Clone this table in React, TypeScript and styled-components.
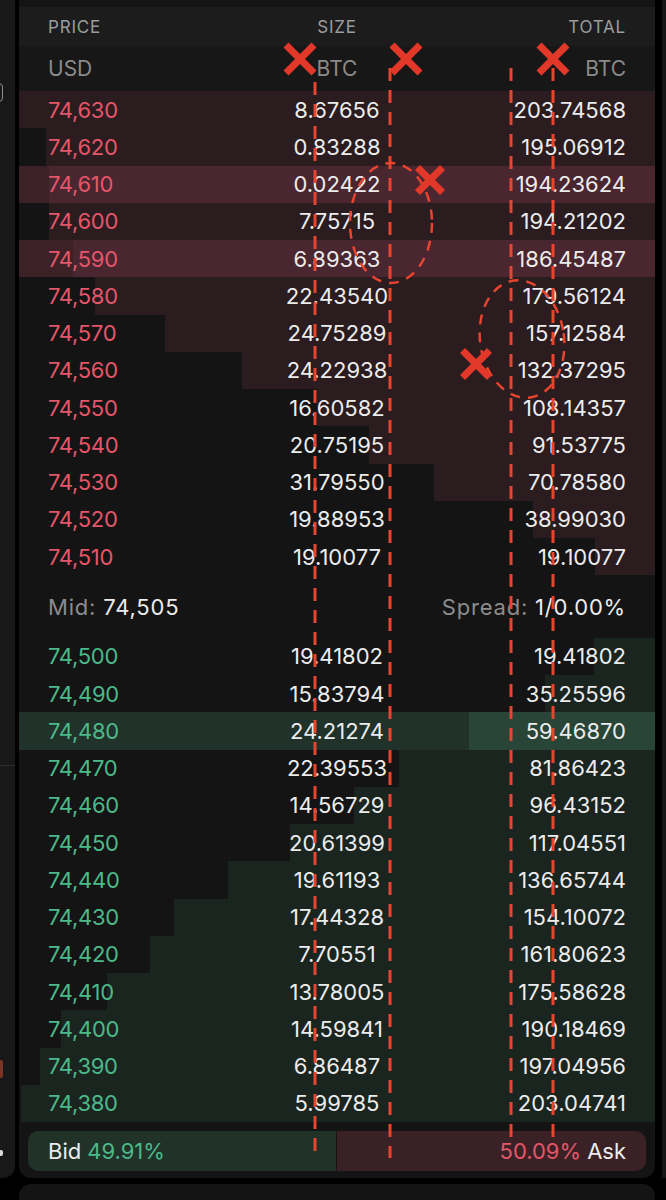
import React from 'react'
import styled, { createGlobalStyle } from 'styled-components'

type Level = { price: string; size: string; total: number; flash?: boolean }

const asks: Level[] = [
  { price: '74,630', size: '8.67656', total: 203.74568 },
  { price: '74,620', size: '0.83288', total: 195.06912 },
  { price: '74,610', size: '0.02422', total: 194.23624, flash: true },
  { price: '74,600', size: '7.75715', total: 194.21202 },
  { price: '74,590', size: '6.89363', total: 186.45487, flash: true },
  { price: '74,580', size: '22.43540', total: 179.56124 },
  { price: '74,570', size: '24.75289', total: 157.12584 },
  { price: '74,560', size: '24.22938', total: 132.37295 },
  { price: '74,550', size: '16.60582', total: 108.14357 },
  { price: '74,540', size: '20.75195', total: 91.53775 },
  { price: '74,530', size: '31.79550', total: 70.7858 },
  { price: '74,520', size: '19.88953', total: 38.9903 },
  { price: '74,510', size: '19.10077', total: 19.10077 },
]

const bids: Level[] = [
  { price: '74,500', size: '19.41802', total: 19.41802 },
  { price: '74,490', size: '15.83794', total: 35.25596 },
  { price: '74,480', size: '24.21274', total: 59.4687, flash: true },
  { price: '74,470', size: '22.39553', total: 81.86423 },
  { price: '74,460', size: '14.56729', total: 96.43152 },
  { price: '74,450', size: '20.61399', total: 117.04551 },
  { price: '74,440', size: '19.61193', total: 136.65744 },
  { price: '74,430', size: '17.44328', total: 154.10072 },
  { price: '74,420', size: '7.70551', total: 161.80623 },
  { price: '74,410', size: '13.78005', total: 175.58628 },
  { price: '74,400', size: '14.59841', total: 190.18469 },
  { price: '74,390', size: '6.86487', total: 197.04956 },
  { price: '74,380', size: '5.99785', total: 203.04741 },
]

const maxTotal = Math.max(...asks.map((a) => a.total), ...bids.map((b) => b.total))

type Side = 'ask' | 'bid'

const palette = {
  ask: { text: '#e4566a', bar: '#2a1c1f', flashRow: '#3c2227', flashBar: '#4a2630' },
  bid: { text: '#4cb98a', bar: '#1b2520', flashRow: '#20322a', flashBar: '#284537' },
}

const GlobalStyle = createGlobalStyle`
  *, *::before, *::after {
    box-sizing: border-box;
  }
  html, body {
    margin: 0;
    padding: 0;
    background: #000;
  }
  body {
    font-family: Inter, "Noto Sans", "Liberation Sans", sans-serif;
    -webkit-font-smoothing: antialiased;
  }
`

const Screen = styled.div`
  position: relative;
  width: 666px;
  height: 1200px;
  overflow: hidden;
  display: flex;
  flex-direction: column;
  background: #000;
`

const TopRow = styled.div`
  height: 1178px;
  display: flex;
`

const BottomRow = styled.div`
  flex: 1;
  margin-top: 6px;
  display: flex;
`

const LeftStub = styled.div`
  width: 15px;
  background: #181818;
  border-bottom-right-radius: 12px;
  display: flex;
  flex-direction: column;
  align-items: flex-start;
`

const StubIcon = styled.div`
  margin: 83px 0 0 -13px;
  width: 16px;
  height: 19px;
  border: 1.5px solid #8d8d8d;
  border-radius: 4px;
`

const StubRule = styled.div`
  margin-top: 663px;
  width: 15px;
  height: 1px;
  background: #2e2e2e;
`

const StubMark = styled.div<{ $color: string; $top: number; $h: number }>`
  margin-top: ${({ $top }) => $top}px;
  width: 3px;
  height: ${({ $h }) => $h}px;
  border-radius: 0 2px 2px 0;
  background: ${({ $color }) => $color};
`

const Panel = styled.div`
  width: 636px;
  margin: 0 7px 0 4px;
  padding-top: 7px;
  background: #141414;
  border-radius: 0 0 12px 12px;
  display: flex;
  flex-direction: column;
`

const RightStub = styled.div`
  width: 4px;
  background: #151515;
`

const LowerPanel = styled.div`
  width: 636px;
  margin: 0 7px 0 19px;
  background: #141414;
  border-radius: 12px 12px 0 0;
`

const Columns = styled.div`
  display: grid;
  grid-template-columns: 1fr 1fr 1fr;
  align-items: center;
  padding: 0 29px;
`

const HeadRow = styled(Columns)`
  height: 39px;
  background: #1c1c1c;
  color: #9c9c9c;
  font-size: 17px;
  letter-spacing: 0.8px;
`

const UnitRow = styled(Columns)`
  height: 45px;
  background: #171717;
  color: #8a8a8a;
  font-size: 21px;
`

const Cell = styled.span<{ $align?: 'left' | 'center' | 'right' }>`
  position: relative;
  text-align: ${({ $align }) => $align || 'left'};
  white-space: nowrap;
`

const BookRow = styled(Columns)<{ $side: Side; $flash?: boolean }>`
  position: relative;
  height: 37.25px;
  font-size: 22px;
  color: #ececec;
  background: ${({ $side, $flash }) => ($flash ? palette[$side].flashRow : 'transparent')};
`

const DepthBar = styled.div<{ $side: Side; $flash?: boolean }>`
  position: absolute;
  top: 0;
  right: 0;
  bottom: 0;
  background: ${({ $side, $flash }) => ($flash ? palette[$side].flashBar : palette[$side].bar)};
`

const Price = styled(Cell)<{ $side: Side }>`
  color: ${({ $side }) => palette[$side].text};
  letter-spacing: -0.3px;
`

const MidRow = styled.div`
  height: 62.5px;
  padding: 0 29px;
  display: flex;
  align-items: center;
  justify-content: space-between;
  font-size: 22px;
  letter-spacing: 0.8px;
  color: #ececec;
`

const Muted = styled.span`
  color: #8c8c8c;
`

const Ratio = styled.div`
  margin: 9px 9px 0;
  height: 40px;
  border-radius: 10px;
  overflow: hidden;
  display: flex;
  gap: 1px;
  font-size: 22px;
  color: #ececec;
`

const RatioPart = styled.div<{ $side: Side; $share?: number }>`
  display: flex;
  align-items: center;
  gap: 6px;
  ${({ $side, $share }) =>
    $side === 'bid'
      ? `width: ${$share}%; padding-left: 20px; background: #213229;`
      : `flex: 1; justify-content: flex-end; padding-right: 20px; background: #3a2126;`}
`

const Pct = styled.span<{ $side: Side }>`
  color: ${({ $side }) => palette[$side].text};
`

const Marks = styled.svg`
  position: absolute;
  top: 0;
  left: 0;
  pointer-events: none;
`

const Row = ({ level, side }: { level: Level; side: Side }) => (
  <BookRow $side={side} $flash={level.flash}>
    <DepthBar $side={side} $flash={level.flash} style={{ width: `${(level.total / maxTotal) * 100}%` }} />
    <Price $side={side}>{level.price}</Price>
    <Cell $align="center">{level.size}</Cell>
    <Cell $align="right">{level.total.toFixed(5)}</Cell>
  </BookRow>
)

const Cross = ({ x, y, s }: { x: number; y: number; s: number }) => (
  <g stroke="#e2382a" strokeWidth={7} strokeLinecap="butt">
    <line x1={x - s / 2} y1={y - s / 2} x2={x + s / 2} y2={y + s / 2} />
    <line x1={x + s / 2} y1={y - s / 2} x2={x - s / 2} y2={y + s / 2} />
  </g>
)

const Annotations = () => (
  <Marks width={666} height={1200} viewBox="0 0 666 1200">
    <g stroke="#e8442e" strokeWidth={3} strokeDasharray="13 9" fill="none">
      <line x1={315} y1={82} x2={315} y2={1158} />
      <line x1={390} y1={68} x2={390} y2={1158} />
      <line x1={511} y1={68} x2={511} y2={1138} />
      <line x1={553} y1={68} x2={553} y2={1138} />
      <ellipse cx={391} cy={223} rx={41} ry={60} strokeDasharray="10 8" strokeWidth={2.5} />
      <ellipse cx={522} cy={339} rx={42} ry={59} strokeDasharray="10 8" strokeWidth={2.5} transform="rotate(-8 522 339)" />
    </g>
    <Cross x={300} y={59} s={28} />
    <Cross x={406} y={59} s={28} />
    <Cross x={553} y={59} s={28} />
    <Cross x={430} y={180} s={25} />
    <Cross x={476} y={364} s={27} />
  </Marks>
)

const App = () => (
  <Screen>
    <GlobalStyle />
    <TopRow>
      <LeftStub>
        <StubIcon />
        <StubRule />
        <StubMark $color="#7a3526" $top={294} $h={18} />
        <StubMark $color="#d8d8d8" $top={72} $h={6} />
      </LeftStub>
      <Panel>
        <HeadRow>
          <Cell>PRICE</Cell>
          <Cell $align="center">SIZE</Cell>
          <Cell $align="right">TOTAL</Cell>
        </HeadRow>
        <UnitRow>
          <Cell>USD</Cell>
          <Cell $align="center">BTC</Cell>
          <Cell $align="right">BTC</Cell>
        </UnitRow>
        {asks.map((a) => (
          <Row key={a.price} level={a} side="ask" />
        ))}
        <MidRow>
          <span>
            <Muted>Mid:</Muted> 74,505
          </span>
          <span>
            <Muted>Spread:</Muted> 1/0.00%
          </span>
        </MidRow>
        {bids.map((b) => (
          <Row key={b.price} level={b} side="bid" />
        ))}
        <Ratio>
          <RatioPart $side="bid" $share={49.91}>
            Bid <Pct $side="bid">49.91%</Pct>
          </RatioPart>
          <RatioPart $side="ask">
            <Pct $side="ask">50.09%</Pct> Ask
          </RatioPart>
        </Ratio>
      </Panel>
      <RightStub />
    </TopRow>
    <BottomRow>
      <LowerPanel />
    </BottomRow>
    <Annotations />
  </Screen>
)

export default App
